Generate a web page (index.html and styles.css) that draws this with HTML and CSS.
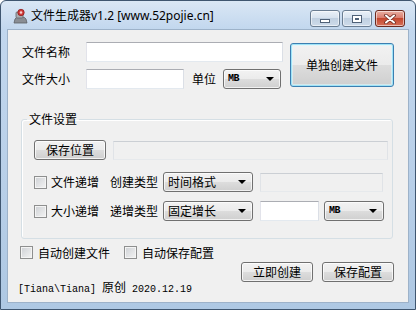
FILE: index.html
```html
<!DOCTYPE html>
<html lang="zh-CN">
<head>
  <meta charset="UTF-8" />
  <title>文件生成器v1.2</title>
  <link rel="stylesheet" href="styles.css">
</head>
<body>
  <div class="window">
    <div class="titlebar">
      <svg class="app-icon" width="16" height="16" viewBox="0 0 16 16">
        <path d="M2 15 L3 11 Q4 9 7 9 L10 9 Q13 9 14 11 L15 15 Z" fill="#8a8e94" stroke="#5c6066" stroke-width="0.8"/>
        <rect x="4" y="4" width="7" height="6" rx="1" fill="#a9adb2" stroke="#62666b" stroke-width="0.8"/>
        <circle cx="9" cy="4.5" r="3.2" fill="#d23a3a" stroke="#8c1f1f" stroke-width="0.8"/>
        <circle cx="9" cy="4.5" r="1.2" fill="#f7d0d0"/>
      </svg>
      <span class="title">文件生成器v1.2 [www.52pojie.cn]</span>
      <div class="caption-buttons">
        <span class="cap cap-min"><i></i></span>
        <span class="cap cap-max"><i></i></span>
        <span class="cap cap-close">
          <svg width="14" height="10" viewBox="0 0 14 10">
            <path d="M3 1.5 L11 8.5 M11 1.5 L3 8.5" stroke="#6b2a20" stroke-width="3.6" stroke-linecap="round"/>
            <path d="M3 1.5 L11 8.5 M11 1.5 L3 8.5" stroke="#fff" stroke-width="2" stroke-linecap="round"/>
          </svg>
        </span>
      </div>
    </div>

    <div class="client">
      <div class="top">
        <div class="fields">
          <div class="row">
            <span class="label">文件名称</span>
            <span class="textbox name-box"></span>
          </div>
          <div class="row">
            <span class="label">文件大小</span>
            <span class="textbox size-box"></span>
            <span class="label unit-label">单位</span>
            <span class="combo unit-combo"><span class="mono">MB</span><b class="arrow"></b></span>
          </div>
        </div>
        <span class="btn btn-default big-btn">单独创建文件</span>
      </div>

      <fieldset class="group">
        <legend>文件设置</legend>
        <div class="grow">
          <span class="btn path-btn">保存位置</span>
          <span class="textbox disabled path-box"></span>
        </div>
        <div class="grow grow-b">
          <span class="check"></span>
          <span class="label check-label">文件递增</span>
          <span class="label type-label">创建类型</span>
          <span class="combo type-combo">时间格式<b class="arrow"></b></span>
          <span class="textbox disabled fmt-box"></span>
        </div>
        <div class="grow grow-c">
          <span class="check"></span>
          <span class="label check-label">大小递增</span>
          <span class="label type-label">递增类型</span>
          <span class="combo type-combo">固定增长<b class="arrow"></b></span>
          <span class="textbox step-box"></span>
          <span class="combo step-unit"><span class="mono">MB</span><b class="arrow"></b></span>
        </div>
      </fieldset>

      <div class="opts">
        <span class="check"></span>
        <span class="opt-label">自动创建文件</span>
        <span class="check"></span>
        <span class="opt-label">自动保存配置</span>
      </div>

      <div class="bottom">
        <span class="credit">[Tiana\Tiana] <span class="cjk">原创</span> 2020.12.19</span>
        <div class="actions">
          <span class="btn">立即创建</span>
          <span class="btn">保存配置</span>
        </div>
      </div>
    </div>
  </div>
</body>
</html>
```

FILE: styles.css
```css
* {
  box-sizing: border-box;
}
body {
  margin: 0;
  font-family: "Noto Sans CJK SC", sans-serif;
  font-size: 12px;
  color: #000;
  background: #fff;
}

.window {
  width: 416px;
  height: 310px;
  display: flex;
  flex-direction: column;
  border: 1px solid #3f5670;
  border-radius: 6px 6px 0 0;
  background: linear-gradient(#dae7f5, #c2d7ee 28px, #b8cfe8 60%, #aec8e3);
}

/* title bar */
.titlebar {
  height: 29px;
  display: flex;
  align-items: center;
  padding: 0 10px 0 11px;
}
.app-icon {
  flex: none;
  margin-top: 1px;
}
.title {
  margin-left: 3px;
  margin-top: 1px;
  font-family: "Noto Sans", "Noto Sans CJK SC", sans-serif;
  font-size: 12px;
  line-height: 16px;
}
.caption-buttons {
  margin-left: auto;
  align-self: flex-start;
  margin-top: 9px;
  display: flex;
  gap: 2px;
}
.cap {
  width: 30px;
  height: 17px;
  border: 1px solid #6a7d92;
  border-radius: 3px;
  display: flex;
  align-items: center;
  justify-content: center;
  background: linear-gradient(#eaf1f8, #d5e1ee 50%, #c0d0e1 50%, #cddbea);
  box-shadow: inset 0 0 0 1px rgba(255, 255, 255, 0.55);
}
.cap-min i {
  width: 10px;
  height: 4px;
  margin-top: 5px;
  background: #fff;
  border: 1px solid #4f6177;
}
.cap-max {
  margin-right: 1px;
}
.cap-max i {
  width: 10px;
  height: 8px;
  border: 1px solid #4f6177;
  background: #fff;
  box-shadow: inset 0 0 0 2px #fff, inset 0 0 0 3px #4f6177;
}
.cap-close {
  border-color: #6b2a20;
  background: linear-gradient(#eab0a2, #d7786a 50%, #c4482f 50%, #d6705a);
}

/* client area */
.client {
  flex: 1;
  margin: 0 7px 7px;
  background: #f0f0f0;
  box-shadow: 0 0 0 1px #9db2c9;
}
.top {
  display: flex;
  padding: 12px 0 0 14px;
}
.fields {
  width: 261px;
}
.row {
  display: flex;
  align-items: center;
  height: 20px;
}
.row + .row {
  margin-top: 7px;
}
.label {
  flex: none;
  line-height: 16px;
}
.row .label:first-child {
  width: 48px;
  margin-right: 16px;
}
.unit-label {
  margin-left: 8px;
  margin-right: 7px;
}

/* controls */
.textbox {
  display: block;
  flex: none;
  height: 20px;
  background: #fff;
  border: 1px solid;
  border-color: #abadb3 #dbdfe6 #e3e9ef #e2e3ea;
}
.textbox.disabled {
  height: 19px;
  background: #f0f0f0;
  border-color: #cbcfd4 #e0e3e7 #e6e9ec #e0e3e7;
}
.name-box {
  width: 197px;
}
.size-box {
  width: 98px;
}
.combo {
  flex: none;
  height: 20px;
  display: flex;
  align-items: center;
  padding: 0 6px 0 4px;
  border: 1px solid #707070;
  border-radius: 3px;
  background: linear-gradient(#f2f2f2, #ebebeb 50%, #dddddd 50%, #cfcfcf);
  box-shadow: inset 0 0 0 1px rgba(255, 255, 255, 0.7);
  line-height: 16px;
}
.arrow {
  margin-left: auto;
  width: 0;
  height: 0;
  border-left: 4px solid transparent;
  border-right: 4px solid transparent;
  border-top: 4px solid #000;
}
.mono {
  font-family: "Liberation Mono", monospace;
  font-weight: bold;
  font-size: 10px;
  letter-spacing: -0.5px;
}
.unit-combo {
  width: 58px;
}
.btn {
  flex: none;
  display: flex;
  align-items: center;
  justify-content: center;
  width: 72px;
  height: 20px;
  border: 1px solid #707070;
  border-radius: 3px;
  background: linear-gradient(#f2f2f2, #ebebeb 50%, #dddddd 50%, #cfcfcf);
  box-shadow: inset 0 0 0 1px rgba(255, 255, 255, 0.75);
  line-height: 16px;
}
.btn-default {
  border-color: #3c7fb1;
  box-shadow: inset 0 0 0 1px #9fe3f7, inset 0 0 0 2px rgba(220, 246, 253, 0.6);
}
.big-btn {
  width: 104px;
  height: 44px;
  margin: 1px 0 0 7px;
}
.check {
  flex: none;
  width: 13px;
  height: 13px;
  border: 1px solid #8e8f8f;
  background: linear-gradient(135deg, #cdd0d4, #f4f4f4);
  box-shadow: inset 0 0 0 1px #f4f4f4;
}

/* group box */
.group {
  width: 372px;
  height: 127px;
  min-width: 0;
  margin: 23px 0 0 13px;
  padding: 14px 0 0 12px;
  border: 1px solid #d5dfe5;
  border-radius: 3px;
  box-shadow: inset 1px 1px 0 #fff;
}
.group legend {
  margin-left: -7px;
  padding: 0 2px;
  line-height: 14px;
}
.grow {
  display: flex;
  align-items: center;
  height: 20px;
}
.grow-b {
  margin-top: 12px;
}
.grow-c {
  margin-top: 9px;
}
.path-box {
  width: 275px;
  margin-left: 7px;
}
.check-label {
  margin-left: 4px;
  width: 48px;
}
.type-label {
  margin-left: 11px;
  margin-right: 5px;
}
.type-combo {
  width: 90px;
  margin-right: 7px;
}
.fmt-box {
  width: 123px;
}
.step-box {
  width: 59px;
}
.step-unit {
  width: 60px;
  margin-left: 5px;
}

/* bottom */
.opts {
  display: flex;
  align-items: center;
  height: 13px;
  margin: 7px 0 0 12px;
}
.opt-label {
  margin-left: 5px;
  margin-right: 14px;
  line-height: 13px;
}
.bottom {
  display: flex;
  align-items: flex-start;
  padding: 3px 14px 0 10px;
}
.credit {
  margin-top: 18px;
  font-family: "Liberation Mono", monospace;
  font-size: 10px;
  line-height: 14px;
  white-space: pre;
}
.credit .cjk {
  font-family: "Noto Sans CJK SC", sans-serif;
  font-size: 12px;
}
.actions {
  margin-left: auto;
  display: flex;
  gap: 9px;
}
```
